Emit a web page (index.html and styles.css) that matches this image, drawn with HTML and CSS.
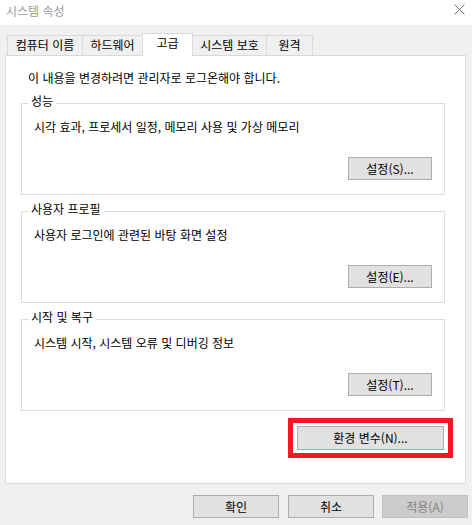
FILE: index.html
```html
<!DOCTYPE html>
<html lang="ko">
<head>
    <meta charset="UTF-8">
    <meta name="viewport" content="width=device-width, initial-scale=1.0">
    <title>시스템 속성</title>
    <link rel="stylesheet" href="styles.css">
</head>
<body>
    <!-- Title bar -->
    <div class="titlebar">
        <span class="title">시스템 속성</span>
        <svg class="close" width="11" height="11" viewBox="0 0 11 11">
            <path d="M0.5 0.5 L10.5 10.5 M10.5 0.5 L0.5 10.5" stroke="#6f6f6f" stroke-width="1" fill="none"/>
        </svg>
    </div>

    <div class="dialog">
        <!-- Tabs -->
        <div class="tabs">
            <div class="tab tab-name">컴퓨터 이름</div>
            <div class="tab tab-hw">하드웨어</div>
            <div class="tab tab-adv active">고급</div>
            <div class="tab tab-prot">시스템 보호</div>
            <div class="tab tab-remote">원격</div>
        </div>

        <!-- Tab page -->
        <div class="panel">
            <p class="notice">이 내용을 변경하려면 관리자로 로그온해야 합니다.</p>

            <fieldset class="group">
                <legend>성능</legend>
                <p class="desc">시각 효과, 프로세서 일정, 메모리 사용 및 가상 메모리</p>
                <div class="group-actions">
                    <button class="btn btn-settings">설정(S)...</button>
                </div>
            </fieldset>

            <fieldset class="group">
                <legend>사용자 프로필</legend>
                <p class="desc">사용자 로그인에 관련된 바탕 화면 설정</p>
                <div class="group-actions">
                    <button class="btn btn-settings">설정(E)...</button>
                </div>
            </fieldset>

            <fieldset class="group">
                <legend>시작 및 복구</legend>
                <p class="desc">시스템 시작, 시스템 오류 및 디버깅 정보</p>
                <div class="group-actions">
                    <button class="btn btn-settings">설정(T)...</button>
                </div>
            </fieldset>

            <div class="env-row">
                <div class="highlight">
                    <button class="btn btn-env">환경 변수(N)...</button>
                </div>
            </div>
        </div>

        <!-- Dialog buttons -->
        <div class="dialog-buttons">
            <button class="btn btn-dialog">확인</button>
            <button class="btn btn-dialog">취소</button>
            <button class="btn btn-dialog" disabled>적용(A)</button>
        </div>
    </div>
</body>
</html>
```

FILE: styles.css
```css
/* General */
* {
    box-sizing: border-box;
}

body {
    margin: 0;
    width: 472px;
    height: 525px;
    font-family: "Noto Sans CJK KR", "Noto Sans", sans-serif;
    font-size: 12px;
    color: #000000;
    background-color: #f0f0f0;
    overflow: hidden;
}

/* Title bar */
.titlebar {
    height: 25px;
    background-color: #ffffff;
    display: flex;
    align-items: center;
    justify-content: space-between;
    padding: 0 7px 0 6px;
}

.title {
    color: #9c9c9c;
    line-height: 16px;
    padding-bottom: 3px;
}

.close {
    display: block;
    margin-bottom: 6px;
}

/* Dialog body */
.dialog {
    padding: 8px 4px 0 5px;
}

/* Tabs */
.tabs {
    display: flex;
    align-items: flex-end;
    height: 22px;
    padding-left: 2px;
}

.tab {
    height: 20px;
    line-height: 17px;
    text-align: center;
    white-space: nowrap;
    border: 1px solid #d9d9d9;
    border-bottom: none;
    background-color: #f0f0f0;
    margin-left: -1px;
}

.tab:first-child {
    margin-left: 0;
}

.tab.active {
    height: 23px;
    margin-bottom: -1px;
    background-color: #ffffff;
    position: relative;
    z-index: 1;
}

.tab-name { width: 76px; }
.tab-hw { width: 61px; }
.tab-adv { width: 51px; }
.tab-prot { width: 75px; }
.tab-remote { width: 47px; }

/* Tab page */
.panel {
    width: 461px;
    height: 429px;
    background-color: #ffffff;
    border: 1px solid #d9d9d9;
    padding: 0 20px 0 15px;
}

.notice {
    margin: 14px 0 0 7px;
    line-height: 16px;
}

/* Group boxes */
.group {
    margin: 6px 0 0 0;
    padding: 6px 12px 14px 12px;
    border: 1px solid #dcdcdc;
    min-width: 0;
}

.panel .group:first-of-type {
    margin-top: 7px;
}

.group legend {
    margin-left: -6px;
    padding: 0 3px 4px 3px;
    line-height: 16px;
}

.desc {
    margin: 0;
    line-height: 16px;
}

.group-actions {
    display: flex;
    justify-content: flex-end;
    margin-top: 22px;
}

/* Buttons */
.btn {
    font-family: inherit;
    font-size: 12px;
    color: #000000;
    background-color: #e1e1e1;
    border: 1px solid #adadad;
    padding: 0;
    margin: 0;
    line-height: 16px;
}

.btn-settings {
    width: 84px;
    height: 23px;
}

.btn:disabled {
    background-color: #cccccc;
    border-color: #bfbfbf;
    color: #838383;
}

/* Environment variables */
.env-row {
    display: flex;
    justify-content: flex-end;
    margin: 7px -8px 0 0;
}

.highlight {
    border: 5px solid #ed1c24;
    padding: 3px 4px;
    background-color: #ffffff;
}

.btn-env {
    display: block;
    width: 147px;
    height: 24px;
}

/* OK / Cancel / Apply */
.dialog-buttons {
    display: flex;
    justify-content: flex-end;
    gap: 8px;
    margin-top: 11px;
}

.btn-dialog {
    width: 86px;
    height: 23px;
}

.btn-dialog:first-child {
    margin-right: 1px;
}
```
